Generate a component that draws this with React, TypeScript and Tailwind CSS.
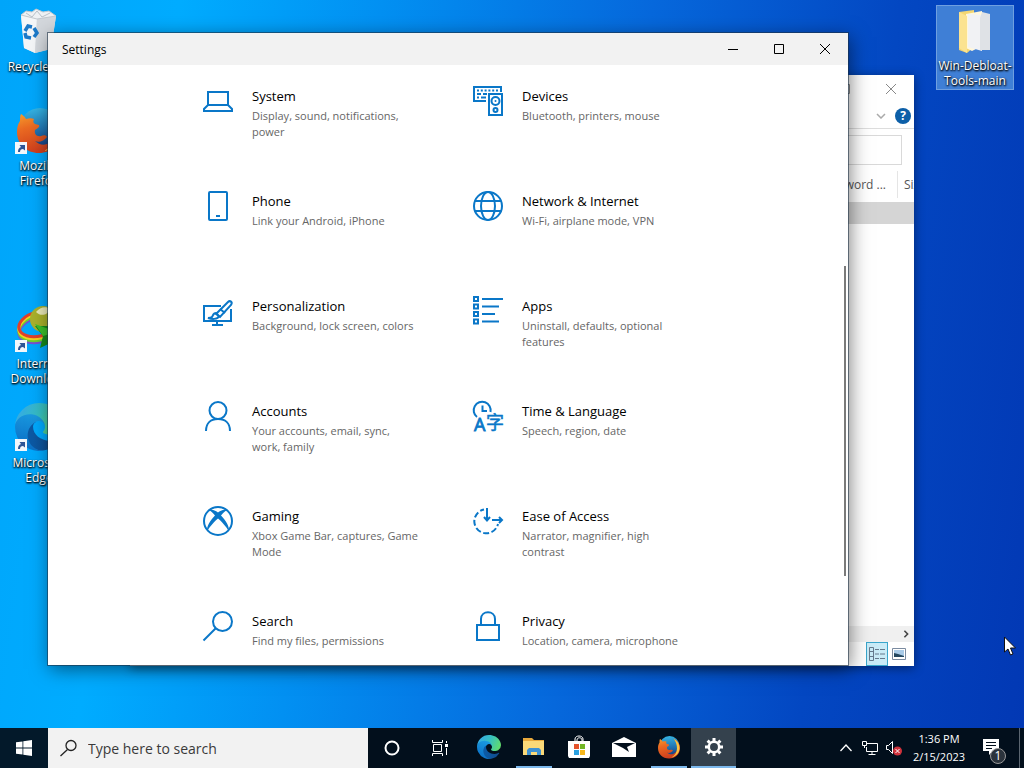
import type { ReactNode } from "react";

interface Category {
  title: string;
  description: string;
  icon: ReactNode;
}

interface DesktopIconProps {
  label: string;
  className: string;
  shortcut?: boolean;
  children: ReactNode;
}

interface TaskButtonProps {
  label: string;
  running?: boolean;
  active?: boolean;
  children: ReactNode;
}

function LineIcon({ children }: { children: ReactNode }) {
  return (
    <svg
      viewBox="0 0 32 32"
      className="h-8 w-8 shrink-0 overflow-visible text-[#0a77c8]"
      fill="none"
      stroke="currentColor"
      strokeWidth="2"
      aria-hidden="true"
    >
      {children}
    </svg>
  );
}

function EdgeLogo({ id, className }: { id: string; className: string }) {
  return (
    <svg viewBox="0 0 256 256" className={className} aria-hidden="true">
      <defs>
        <linearGradient id={`${id}-dark`} x1="0.2" y1="0.5" x2="1" y2="0.5">
          <stop offset="0" stopColor="#0c59a4" />
          <stop offset="1" stopColor="#114a8b" />
        </linearGradient>
        <linearGradient id={`${id}-mid`} x1="0.6" y1="0" x2="0.3" y2="1">
          <stop offset="0" stopColor="#1b9de2" />
          <stop offset="1" stopColor="#0a6cc4" />
        </linearGradient>
        <linearGradient id={`${id}-top`} x1="0" y1="0.3" x2="1" y2="0.6">
          <stop offset="0" stopColor="#35a8e8" />
          <stop offset="0.5" stopColor="#36c0c0" />
          <stop offset="1" stopColor="#62dd6c" />
        </linearGradient>
      </defs>
      <path
        fill={`url(#${id}-dark)`}
        d="M231 190.5c-3.4 1.8-6.9 3.4-10.5 4.7a101.5 101.5 0 0 1-35.9 6.4c-47.3 0-88.5-32.5-88.5-74.3a31.5 31.5 0 0 1 16.4-27.3c-42.8 1.8-53.8 46.4-53.8 72.5 0 74 68.1 81.4 82.8 81.4 7.9 0 19.8-2.3 27-4.6l1.3-.4a128.3 128.3 0 0 0 66.6-52.8 4 4 0 0 0-5.4-5.6Z"
      />
      <path
        fill={`url(#${id}-mid)`}
        d="M105.7 241.4a79.2 79.2 0 0 1-22.7-21.3 80.7 80.7 0 0 1 29.5-120c3.2-1.5 8.5-4.1 15.6-4a32.4 32.4 0 0 1 25.7 13 31.9 31.9 0 0 1 6.3 18.7c0-.2 24.5-79.6-80-79.6-43.9 0-80 41.6-80 78.2a130.2 130.2 0 0 0 12.1 56 128 128 0 0 0 156.4 67 75.5 75.5 0 0 1-62.8-8Z"
      />
      <path
        fill={`url(#${id}-top)`}
        d="M152.3 148.9c-.9 1-3.4 2.5-3.4 5.7 0 2.6 1.7 5.2 4.8 7.3 14.3 10 41.4 8.6 41.5 8.6a59.6 59.6 0 0 0 30.3-8.3 61.4 61.4 0 0 0 30.4-52.9c.3-22.4-8-37.3-11.3-43.9C223.5 23.9 177.7 0 128 0A128 128 0 0 0 0 126.2c.5-36.5 36.8-66 80-66 3.5 0 23.5.3 42 10 16.3 8.6 24.9 19 30.8 29.2 6.2 10.7 7.3 24.1 7.3 29.5s-2.7 13.3-7.8 19.9Z"
      />
    </svg>
  );
}

function FirefoxLogo({ id, className }: { id: string; className: string }) {
  return (
    <svg viewBox="0 0 48 48" className={className} aria-hidden="true">
      <defs>
        <linearGradient id={`${id}-globe`} x1="0.4" y1="0" x2="0.5" y2="1">
          <stop offset="0" stopColor="#35b5e4" />
          <stop offset="0.6" stopColor="#1f6fae" />
          <stop offset="1" stopColor="#16397c" />
        </linearGradient>
        <linearGradient id={`${id}-fox`} x1="0" y1="0" x2="0.3" y2="1">
          <stop offset="0" stopColor="#f6a02c" />
          <stop offset="0.4" stopColor="#ea6a22" />
          <stop offset="1" stopColor="#cf3f1d" />
        </linearGradient>
      </defs>
      <circle cx="25" cy="22" r="20" fill={`url(#${id}-globe)`} />
      <path
        fill={`url(#${id}-fox)`}
        d="M6 8c2 1 4 3 5 5 3-1 6-1 8 0-1 2-1 4 1 5l4 1c1 2-1 3-4 5-1 4 2 7 6 6 3-1 5-1 6 1-3 4-8 6-12 4 5 5 13 5 18-1 4-5 4-11 1-17-1-4-4-8-7-10 8 3 14 10 14 19 0 12-9 21-22 21S2 38 2 26c0-5 1-8 3-11 0-3 0-5 1-7Z"
      />
      <path
        fill="#f9c440"
        d="M34 8c7 4 11 10 11 18 0 10-7 17-16 19 7-4 11-10 11-18 0-7-2-13-6-19Z"
      />
    </svg>
  );
}

const categories: Category[] = [
  {
    title: "System",
    description: "Display, sound, notifications,\npower",
    icon: (
      <LineIcon>
        <path d="M6 20V7h20v13M6 20h20l4 4v2H2v-2Z" />
      </LineIcon>
    ),
  },
  {
    title: "Devices",
    description: "Bluetooth, printers, mouse",
    icon: (
      <LineIcon>
        <path d="M14 16H2V2h27v5" />
        <path d="M5 5.500h21" strokeDasharray="2 1.800" />
        <path d="M5 9h4m2 0h4M5 12.500h2m2 0h5" />
        <path d="M17 9h13v21H17Z" />
        <circle cx="23.500" cy="16" r="4" />
        <circle cx="23.500" cy="16" r="1" fill="currentColor" stroke="none" />
        <circle cx="23.500" cy="25" r="2" />
      </LineIcon>
    ),
  },
  {
    title: "Phone",
    description: "Link your Android, iPhone",
    icon: (
      <LineIcon>
        <rect x="7" y="2" width="18" height="28" rx="1" />
        <path d="M14 26h4" />
      </LineIcon>
    ),
  },
  {
    title: "Network & Internet",
    description: "Wi-Fi, airplane mode, VPN",
    icon: (
      <LineIcon>
        <circle cx="16" cy="16" r="14" />
        <ellipse cx="16" cy="16" rx="7" ry="14" />
        <path d="M3 11h26M3 21h26" />
      </LineIcon>
    ),
  },
  {
    title: "Personalization",
    description: "Background, lock screen, colors",
    icon: (
      <LineIcon>
        <path d="M19 11H2v15h27V14M15 26v4m-5 0h11" />
        <path d="m14 19 12-12c2-2 5 0 3 3L18 22Z" fill="white" />
        <path d="m18 14 5 4" />
        <path d="M14 18c-3 0-3 3-4 4s-2 1-4 1c3 1 10 2 11-2Z" />
      </LineIcon>
    ),
  },
  {
    title: "Apps",
    description: "Uninstall, defaults, optional\nfeatures",
    icon: (
      <LineIcon>
        <path d="M2 2h4v4H2ZM2 9.500h4v4H2ZM2 17h4v4H2ZM2 24.500h4v4H2Z" />
        <path d="M10 4h21M10 11.500h17M10 19h13M10 26.500h17" />
      </LineIcon>
    ),
  },
  {
    title: "Accounts",
    description: "Your accounts, email, sync,\nwork, family",
    icon: (
      <LineIcon>
        <circle cx="16" cy="10.500" r="8.500" />
        <path d="M4 31c0-8 5-12 12-12s12 4 12 12" />
      </LineIcon>
    ),
  },
  {
    title: "Time & Language",
    description: "Speech, region, date",
    icon: (
      <LineIcon>
        <path d="M5 17A8.500 8.500 0 1 1 18.500 12M10.500 5.500V11H15" />
        <text
          x="2"
          y="31"
          fill="currentColor"
          strokeWidth="0.800"
          className="font-['Open_Sans',sans-serif] text-[18px]"
        >
          A
        </text>
        <text
          x="14"
          y="29"
          fill="currentColor"
          strokeWidth="0.500"
          className="font-['Noto_Sans_CJK_SC',sans-serif] text-[18px]"
        >
          字
        </text>
      </LineIcon>
    ),
  },
  {
    title: "Gaming",
    description: "Xbox Game Bar, captures, Game\nMode",
    icon: (
      <LineIcon>
        <circle cx="16" cy="16" r="14" />
        <path
          fill="currentColor"
          stroke="none"
          d="M7 5c4-1 7 1 9 2.500C18 6 21 4 25 5c-2 1-4 3-6 5.500 5 5 8.500 11 8 16C24 21 19 16 16 13.500 13 16 8 21 5 26.500 4.500 21.500 8 15.500 13 10.500 11 8 9 6 7 5Z"
        />
      </LineIcon>
    ),
  },
  {
    title: "Ease of Access",
    description: "Narrator, magnifier, high\ncontrast",
    icon: (
      <LineIcon>
        <path
          d="M12 4.500A12 12 0 1 0 26 19"
          strokeDasharray="6 2.500"
          strokeDashoffset="2"
        />
        <path d="M15 3v12m-3-3 3 3.500 3-3.500M20 15h10m-3-3 3 3-3 3" />
      </LineIcon>
    ),
  },
  {
    title: "Search",
    description: "Find my files, permissions",
    icon: (
      <LineIcon>
        <circle cx="20.500" cy="11.500" r="9.500" />
        <path d="M13.500 18.500 1.500 30.500" />
      </LineIcon>
    ),
  },
  {
    title: "Privacy",
    description: "Location, camera, microphone",
    icon: (
      <LineIcon>
        <path d="M5 15h22v15H5ZM9 15V9c0-9 14-9 14 0v6" />
      </LineIcon>
    ),
  },
];

function DesktopIcon({ label, className, shortcut, children }: DesktopIconProps) {
  return (
    <button type="button" className={`flex flex-col items-center ${className}`}>
      <span className="relative h-12 w-12">
        {children}
        {shortcut && (
          <svg viewBox="0 0 12 12" className="absolute bottom-0 left-0 h-3 w-3">
            <path d="M0 0h12v12H0Z" fill="#f4f7fb" />
            <path d="M3 10c0-3 1-4 3-5L4.500 3H10v5.500L8 7c-2 0-3 1-3 3Z" fill="#2f5596" />
          </svg>
        )}
      </span>
      <span className="mt-1 text-center text-[12px] leading-[15px] whitespace-pre text-white [text-shadow:1px_1px_2px_#000,0_1px_2px_#000]">
        {label}
      </span>
    </button>
  );
}

function TaskButton({ label, running, active, children }: TaskButtonProps) {
  return (
    <button
      type="button"
      aria-label={label}
      className={`flex w-[45px] flex-col items-center ${active ? "bg-[#34414d]" : ""}`}
    >
      <span className="flex flex-1 items-center">{children}</span>
      {active && <span className="h-0.5 w-full bg-[#7cb8ec]" />}
      {!active && <span className={`h-0.5 w-9 ${running ? "bg-[#7cb8ec]" : ""}`} />}
    </button>
  );
}

function ExplorerWindow() {
  return (
    <section
      aria-label="File Explorer"
      className="absolute top-[75px] right-[110px] bottom-[62px] left-[130px] flex flex-col overflow-hidden bg-white text-[#555] shadow-[0_2px_10px_rgba(0,0,0,0.45)]"
    >
      <div className="flex h-7 items-center justify-end gap-9 pr-[18px]">
        <svg viewBox="0 0 10 10" className="h-[10px] w-[10px]" fill="none" stroke="#888">
          <path d="M.5.5h9v9h-9Z" />
        </svg>
        <button type="button" aria-label="Close File Explorer">
          <svg viewBox="0 0 10 10" className="h-[10px] w-[10px]" fill="none" stroke="#888">
            <path d="m0 0 10 10M10 0 0 10" />
          </svg>
        </button>
      </div>
      <div className="flex h-[26px] items-center justify-end gap-[9px] border-b border-[#ddd] pr-[3px]">
        <svg viewBox="0 0 10 6" className="h-[6px] w-[10px]" fill="none" stroke="#aaa" strokeWidth="1.500">
          <path d="m1 1 4 4 4-4" />
        </svg>
        <button
          type="button"
          aria-label="Help"
          className="h-4 w-4 rounded-full bg-[#0c5fa8] text-[12px] leading-4 font-bold text-white"
        >
          ?
        </button>
      </div>
      <div className="flex h-[42px] items-center pr-3">
        <input
          aria-label="Search files"
          className="h-[30px] w-full border border-[#d9d9d9] bg-white outline-none"
        />
      </div>
      <div className="flex h-[27px] items-center justify-end text-[12px] whitespace-nowrap">
        <span className="pr-[11px]">Password ...</span>
        <span className="h-full w-[17px] overflow-hidden border-l border-[#e5e5e5] pl-1.5 leading-[27px]">
          Size
        </span>
      </div>
      <div className="mt-1 h-[22px] shrink-0 bg-[#d5d5d5]" />
      <div className="flex-1" />
      <div className="flex h-4 items-center justify-end bg-[#f0f0f0] pr-[5px]">
        <svg viewBox="0 0 6 10" className="h-2 w-[6px]" fill="none" stroke="#444" strokeWidth="2">
          <path d="m1 1 4 4-4 4" />
        </svg>
      </div>
      <div className="flex h-6 items-center justify-end gap-1 pr-2">
        <button
          type="button"
          aria-label="Details view"
          className="flex h-full w-[22px] items-center justify-center border border-[#3aa6cc] bg-[#c9ebf7]"
        >
          <svg viewBox="0 0 16 14" className="h-[14px] w-4" fill="none" stroke="#65798c">
            <path d="M.5.5h4v13h-4ZM.5 4.500h4M.5 9.500h4M6 2.500h4m1 0h5M6 7h4m1 0h5M6 11.500h4m1 0h5" />
          </svg>
        </button>
        <button type="button" aria-label="Large icons view">
          <svg viewBox="0 0 14 12" className="h-3 w-[14px]">
            <path d="M.5.5h13v11H.5Z" fill="#fff" stroke="#7b8ba0" />
            <path d="M2 2h10v7H2Z" fill="#a9cbe8" />
            <path d="M2 9V5l4 1 6 2v1Z" fill="#24475f" />
          </svg>
        </button>
      </div>
    </section>
  );
}

function SettingsWindow() {
  return (
    <section
      aria-label="Settings"
      className="absolute top-[33px] right-[176px] bottom-[63px] left-12 flex flex-col bg-white shadow-[0_0_0_1px_rgba(30,50,70,0.6),2px_4px_18px_rgba(0,0,0,0.5)]"
    >
      <header className="flex h-8 shrink-0 items-stretch bg-[#f2f2f2] pl-3.5">
        <h1 className="flex-1 text-[12px] leading-[34px] text-black">Settings</h1>
        <button type="button" aria-label="Minimize" className="flex w-[46px] items-center justify-center">
          <svg viewBox="0 0 10 10" className="h-[10px] w-[10px]" stroke="#000">
            <path d="M0 5.500h10" />
          </svg>
        </button>
        <button type="button" aria-label="Maximize" className="flex w-[46px] items-center justify-center">
          <svg viewBox="0 0 10 10" className="h-[10px] w-[10px]" fill="none" stroke="#000">
            <path d="M.5.5h9v9h-9Z" />
          </svg>
        </button>
        <button type="button" aria-label="Close" className="flex w-[46px] items-center justify-center">
          <svg viewBox="0 0 10 10" className="h-[10px] w-[10px]" fill="none" stroke="#000">
            <path d="m0 0 10 10M10 0 0 10" />
          </svg>
        </button>
      </header>
      <main className="min-h-0 flex-1 overflow-hidden pt-5">
        <ul className="grid auto-rows-[105px] grid-cols-[270px_270px] justify-center">
          {categories.map(({ title, description, icon }) => (
            <li key={title}>
              <a href="#" className="flex gap-[18px] pl-6">
                {icon}
                <span className="whitespace-nowrap">
                  <span className="block text-[13px] leading-[23px] text-black">{title}</span>
                  <span className="block text-[11px] leading-4 whitespace-pre text-[#666]">
                    {description}
                  </span>
                </span>
              </a>
            </li>
          ))}
        </ul>
      </main>
      <div className="absolute top-[233px] right-0.5 bottom-[89px] w-0.5 bg-[#7a7a7a]" />
    </section>
  );
}

function Taskbar() {
  return (
    <nav aria-label="Taskbar" className="flex h-10 shrink-0 items-stretch bg-[#020f1c] text-white">
      <button type="button" aria-label="Start" className="flex w-12 items-center justify-center bg-[#03192a]">
        <svg viewBox="0 0 16 16" className="h-4 w-4" fill="#fff">
          <path d="M0 2.300 6.500 1.400v6.200H0ZM7.300 1.300 16 0v7.600H7.300ZM0 8.400h6.500v6.200L0 13.700ZM7.300 8.400H16V16l-8.700-1.300Z" />
        </svg>
      </button>
      <label className="flex w-80 items-center bg-[#f2f2f2] pl-3">
        <svg viewBox="0 0 18 18" className="h-[18px] w-[18px] shrink-0" fill="none" stroke="#222" strokeWidth="1.300">
          <circle cx="11" cy="6.500" r="5" />
          <path d="m7.500 10.500-7 6.500" />
        </svg>
        <input
          type="text"
          aria-label="Type here to search"
          placeholder="Type here to search"
          className="ml-2.5 w-full bg-transparent text-[14px] text-[#3a3a3a] outline-none placeholder:text-[#3a3a3a]"
        />
      </label>
      <button type="button" aria-label="Cortana" className="flex w-12 items-center justify-center">
        <svg viewBox="0 0 16 16" className="h-4 w-4" fill="none" stroke="#fff" strokeWidth="2">
          <circle cx="8" cy="8" r="6.500" />
        </svg>
      </button>
      <button type="button" aria-label="Task View" className="mr-0.5 flex w-12 items-center justify-center">
        <svg viewBox="0 0 16 16" className="h-4 w-4" fill="none" stroke="#fff">
          <path d="M.5 0v2.500h10V0M.5 16v-2.500h10V16M1.500 4.500h8v7h-8ZM14.500 1v2m0 5v7" />
          <path d="M13 4h3v3h-3Z" fill="#fff" stroke="none" />
        </svg>
      </button>
      <TaskButton label="Microsoft Edge">
        <EdgeLogo id="task-edge" className="h-6 w-6" />
      </TaskButton>
      <TaskButton label="File Explorer" running>
        <svg viewBox="0 0 24 20" className="h-5 w-6">
          <path d="M1 1h9l2 2h10v5H1Z" fill="#e8a93c" />
          <path d="M1 4h21v14H1Z" fill="#fbd978" />
          <path d="M5 18v-5l2-2h10l2 2v5h-4v-3H9v3Z" fill="#3f92d2" />
        </svg>
      </TaskButton>
      <TaskButton label="Microsoft Store">
        <svg viewBox="0 0 24 24" className="h-6 w-6">
          <path d="M8 7V4c0-4 8-4 8 0v3M10 7V5c0-3 5-3 5 0v2" fill="none" stroke="#fff" />
          <path d="M1 6h22v15l-1 2H2l-1-2Z" fill="#fff" />
          <path d="M7 9h5v5H7Z" fill="#e5532c" />
          <path d="M13 9h5v5h-5Z" fill="#72b626" />
          <path d="M7 15h5v5H7Z" fill="#2aa0e0" />
          <path d="M13 15h5v5h-5Z" fill="#f6b71d" />
        </svg>
      </TaskButton>
      <TaskButton label="Mail">
        <svg viewBox="0 0 24 20" className="h-5 w-6">
          <path d="M0 6 12 0l12 6v14H0Z" fill="#fff" />
          <path d="M1 6h22l-8 4 2 5-6-4Z" fill="#020f1c" />
        </svg>
      </TaskButton>
      <TaskButton label="Firefox" running>
        <FirefoxLogo id="task-firefox" className="h-6 w-6" />
      </TaskButton>
      <TaskButton label="Settings" active>
        <svg viewBox="0 0 20 20" className="h-5 w-5" fill="none" stroke="#fff">
          <circle cx="10" cy="10" r="5.200" strokeWidth="2.500" />
          <path
            strokeWidth="3"
            d="M10 1v3m0 12v3M1 10h3m12 0h3M3.600 3.600l2.200 2.200m8.400 8.400 2.200 2.200M3.600 16.400l2.200-2.200m8.400-8.400 2.200-2.200"
          />
        </svg>
      </TaskButton>
      <div className="ml-auto flex items-center">
        <button type="button" aria-label="Show hidden icons" className="flex w-6 justify-center">
          <svg viewBox="0 0 12 8" className="h-2 w-3" fill="none" stroke="#fff" strokeWidth="1.300">
            <path d="m.5 7 5.500-6 5.500 6" />
          </svg>
        </button>
        <button type="button" aria-label="Network" className="flex w-6 justify-center">
          <svg viewBox="0 0 16 14" className="h-[14px] w-4" fill="none" stroke="#fff">
            <path d="M5 2.500h10.500v8H4.500V6M10 10.500v3m-3.500 0h7M.5.5h4v4h-4ZM2.500 4.500V7" />
          </svg>
        </button>
        <button type="button" aria-label="Volume muted" className="flex w-6 justify-center">
          <svg viewBox="0 0 18 16" className="h-4 w-[18px]">
            <path d="M1.500 5.500h2l4-4v12l-4-4h-2Z" fill="none" stroke="#fff" />
            <circle cx="12.500" cy="11" r="4.500" fill="#d0323c" />
            <path d="m10.500 9 4 4m0-4-4 4" stroke="#fff" />
          </svg>
        </button>
        <button type="button" className="w-[66px] text-center text-[11px] leading-[18px]">
          <span className="block">1:36 PM</span>
          <span className="block">2/15/2023</span>
        </button>
        <button type="button" aria-label="1 new notification" className="flex w-[47px] pl-2.5">
          <span className="relative h-6 w-6">
            <svg viewBox="0 0 24 24" className="h-6 w-6">
              <path d="M1 3h16v12h-6l-4 4v-4H1Z" fill="#fff" />
              <path d="M4 6.500h10M4 9.500h10M4 12.500h6" stroke="#020f1c" />
            </svg>
            <span className="absolute right-0 -bottom-1 h-4 w-4 rounded-full border border-[#999] bg-[#2b333c] text-[12px] leading-[14px]">
              1
            </span>
          </span>
        </button>
        <div className="h-10 w-[5px] border-l border-[#5b6570]" />
      </div>
    </nav>
  );
}

export default function App() {
  return (
    <div className="flex h-screen flex-col overflow-hidden bg-[#0346ba] font-['Open_Sans','Noto_Sans',sans-serif]">
      <div className="relative min-h-0 flex-1 bg-[linear-gradient(98deg,#00a5fa_0%,#00acff_16%,#0290f2_34%,#0668dc_58%,#0347c2_80%,#0238b4_100%)]">
        <div className="grid auto-rows-[99px] grid-cols-[78px] pt-[7px]">
          <DesktopIcon label="Recycle Bin" className="row-start-1">
            <svg viewBox="0 0 48 48" className="h-12 w-12">
              <path d="m6 8 35 1-5 33-16 4-11-5Z" fill="#dfe3e8" />
              <path d="m6 8 16 3-2 35-11-5Z" fill="#f4f6f8" />
              <path d="m22 11 19-2-5 33-16 4Z" fill="#d3d7dc" />
              <path d="m6 8 5-4 6 1 4-3 7 3 6-1 7 5-19 3Z" fill="#eef1f4" stroke="#c2c8ce" />
              <path d="m11 6 6 4 5-6 5 6 8-4" stroke="#b9c0c7" fill="none" />
              <g fill="none" stroke="#1c79c8" strokeWidth="3.500">
                <path d="m10 24 3-5 4 1M19 21l3 5-3 4M16 31l-5-1-1-4" />
              </g>
            </svg>
          </DesktopIcon>
          <DesktopIcon label={"Mozilla\nFirefox"} className="row-start-2" shortcut>
            <FirefoxLogo id="desktop-firefox" className="h-12 w-12" />
          </DesktopIcon>
          <DesktopIcon label={"Internet\nDownload"} className="row-start-4" shortcut>
            <svg viewBox="0 0 48 48" className="h-12 w-12" fill="none">
              <ellipse cx="24" cy="26" rx="20" ry="12" stroke="#7a4fd0" strokeWidth="3" transform="rotate(-14 24 28)" />
              <ellipse cx="24" cy="24" rx="20" ry="12" stroke="#6fd02f" strokeWidth="3" transform="rotate(-14 24 26)" />
              <ellipse cx="24" cy="22" rx="20" ry="12" stroke="#f5d21f" strokeWidth="3" transform="rotate(-14 24 24)" />
              <ellipse cx="24" cy="20" rx="20" ry="12" stroke="#e0402a" strokeWidth="3" transform="rotate(-14 24 22)" />
              <circle cx="28" cy="15" r="13" fill="#a9b12c" />
              <path d="M21 8c4-5 10-6 14-3-2 6-9 8-14 3Z" fill="#e9e9b8" />
              <path d="M20 22h22v14l-17 8 3-12Z" fill="#158a1c" />
              <path d="m20 20 22 8-14 4Z" fill="#3cc12d" />
            </svg>
          </DesktopIcon>
          <DesktopIcon label={"Microsoft\nEdge"} className="row-start-5" shortcut>
            <EdgeLogo id="desktop-edge" className="h-12 w-12" />
          </DesktopIcon>
        </div>
        <div className="absolute top-[5px] right-2.5 w-[78px] border border-[#6f9fe0] bg-[#3f7fd6] pb-px">
          <DesktopIcon label={"Win-Debloat-\nTools-main"} className="w-full">
            <svg viewBox="0 0 48 48" className="h-12 w-12">
              <path d="m8 6 15-2v37l-7 6-8-3Z" fill="#f3d672" />
              <path d="M15 8 31 5v35l-10 5-6-3Z" fill="#fff7dc" />
              <path d="m17 8 14 1v36l-14-4Z" fill="#f1f2f4" />
              <path d="m31 6 8 2v36H29V12Z" fill="#dfe2e6" />
              <path d="m8 6 8 4v37l-8-5Z" fill="#fbe391" />
            </svg>
          </DesktopIcon>
        </div>
        <ExplorerWindow />
        <SettingsWindow />
        <svg viewBox="0 0 12 20" className="absolute right-2 bottom-[72px] h-5 w-3" aria-hidden="true">
          <path d="M.5 1v15l3.500-3 2.500 6 2.500-1-2.500-6h5Z" fill="#fff" stroke="#111" />
        </svg>
      </div>
      <Taskbar />
    </div>
  );
}
